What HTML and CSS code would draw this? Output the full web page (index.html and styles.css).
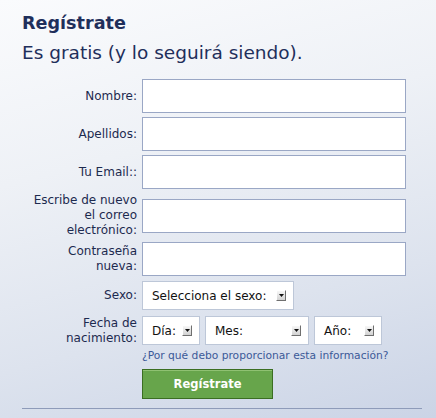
FILE: index.html
```html
<!DOCTYPE html>
<html lang="es">
<head>
<meta charset="utf-8">
<title>Regístrate</title>
<link rel="stylesheet" href="styles.css">
</head>
<body>
<div class="page">
  <h1 class="title">Regístrate</h1>
  <p class="subtitle">Es gratis (y lo seguirá siendo).</p>
  <form class="form">
    <div class="row">
      <label class="label">Nombre:</label>
      <div class="field"><span class="input"></span></div>
    </div>
    <div class="row">
      <label class="label">Apellidos:</label>
      <div class="field"><span class="input"></span></div>
    </div>
    <div class="row">
      <label class="label">Tu Email::</label>
      <div class="field"><span class="input"></span></div>
    </div>
    <div class="row">
      <label class="label">Escribe de nuevo<br>el correo<br>electrónico:</label>
      <div class="field"><span class="input"></span></div>
    </div>
    <div class="row">
      <label class="label">Contraseña<br>nueva:</label>
      <div class="field"><span class="input"></span></div>
    </div>
    <div class="row row-select">
      <label class="label">Sexo:</label>
      <div class="field">
        <span class="select sel-sexo">Selecciona el sexo:<span class="arrow"><svg width="5" height="3" viewBox="0 0 5 3"><path d="M0 0H5L2.5 3Z" fill="#111"/></svg></span></span>
      </div>
    </div>
    <div class="row row-select">
      <label class="label">Fecha de<br>nacimiento:</label>
      <div class="field selects">
        <span class="select sel-dia">Día:<span class="arrow"><svg width="5" height="3" viewBox="0 0 5 3"><path d="M0 0H5L2.5 3Z" fill="#111"/></svg></span></span>
        <span class="select sel-mes">Mes:<span class="arrow"><svg width="5" height="3" viewBox="0 0 5 3"><path d="M0 0H5L2.5 3Z" fill="#111"/></svg></span></span>
        <span class="select sel-ano">Año:<span class="arrow"><svg width="5" height="3" viewBox="0 0 5 3"><path d="M0 0H5L2.5 3Z" fill="#111"/></svg></span></span>
      </div>
    </div>
    <div class="row row-link">
      <span class="label"></span>
      <a class="why" href="#">¿Por qué debo proporcionar esta información?</a>
    </div>
    <div class="row row-button">
      <span class="label"></span>
      <span class="button">Regístrate</span>
    </div>
  </form>
  <div class="rule"></div>
</div>
</body>
</html>
```
FILE: styles.css
```css
html, body {
  margin: 0;
  padding: 0;
  height: 100%;
}
body {
  font-family: "DejaVu Sans", "Liberation Sans", sans-serif;
  background: linear-gradient(165deg, #fafbfd 0%, #eef1f6 35%, #dde3ee 70%, #cbd4e6 100%);
  overflow: hidden;
}
.page {
  padding: 12px 0 0 0;
}
.title {
  margin: 0 0 0 22px;
  font-size: 17.6px;
  line-height: 22px;
  font-weight: bold;
  color: #1f2f5b;
}
.subtitle {
  margin: 7px 0 0 22px;
  font-size: 18.5px;
  line-height: 24px;
  color: #1f2f5b;
}
.form {
  margin-top: 14px;
  display: flex;
  flex-direction: column;
  gap: 4px;
}
.row {
  display: flex;
  align-items: center;
  gap: 5px;
}
.label {
  width: 137px;
  flex: none;
  text-align: right;
  font-size: 12px;
  line-height: 15px;
  color: #1d2a4f;
}
.field {
  display: flex;
}
.input {
  display: block;
  width: 264px;
  height: 34px;
  box-sizing: border-box;
  background: #fff;
  border: 1px solid #9aa7c5;
}
.row-select {
  min-height: 31px;
}
.selects {
  gap: 5px;
}
.select {
  display: flex;
  align-items: center;
  justify-content: space-between;
  height: 29px;
  box-sizing: border-box;
  background: #fff;
  border: 1px solid #bdc7d8;
  padding: 0 7px 0 9px;
  font-size: 12px;
  color: #111;
}
.sel-sexo { width: 152px; }
.sel-dia { width: 58px; }
.sel-mes { width: 104px; }
.sel-ano { width: 68px; }
.arrow {
  display: flex;
  align-items: flex-start;
  justify-content: center;
  width: 10px;
  height: 11px;
  box-sizing: border-box;
  padding-top: 3px;
  background: linear-gradient(#f7f7f7, #d2d2d2);
  border-right: 1px solid #6f6f6f;
  border-bottom: 1px solid #6f6f6f;
  border-top: 1px solid #fff;
  border-left: 1px solid #fff;
}
.arrow svg {
  display: block;
}
.row-link {
  margin-top: -1px;
}
.why {
  font-size: 10.7px;
  line-height: 13px;
  color: #3b5998;
  text-decoration: none;
}
.row-button {
  margin-top: 3px;
}
.button {
  display: flex;
  align-items: center;
  justify-content: center;
  width: 131px;
  height: 30px;
  box-sizing: border-box;
  background: #67a54b;
  border: 1px solid #3b6e22;
  box-shadow: inset 0 1px 0 #8fc172;
  color: #fff;
  font-weight: bold;
  font-size: 11.5px;
}
.rule {
  margin: 9px 14px 0 22px;
  height: 1px;
  background: #8e9bb9;
}
```
